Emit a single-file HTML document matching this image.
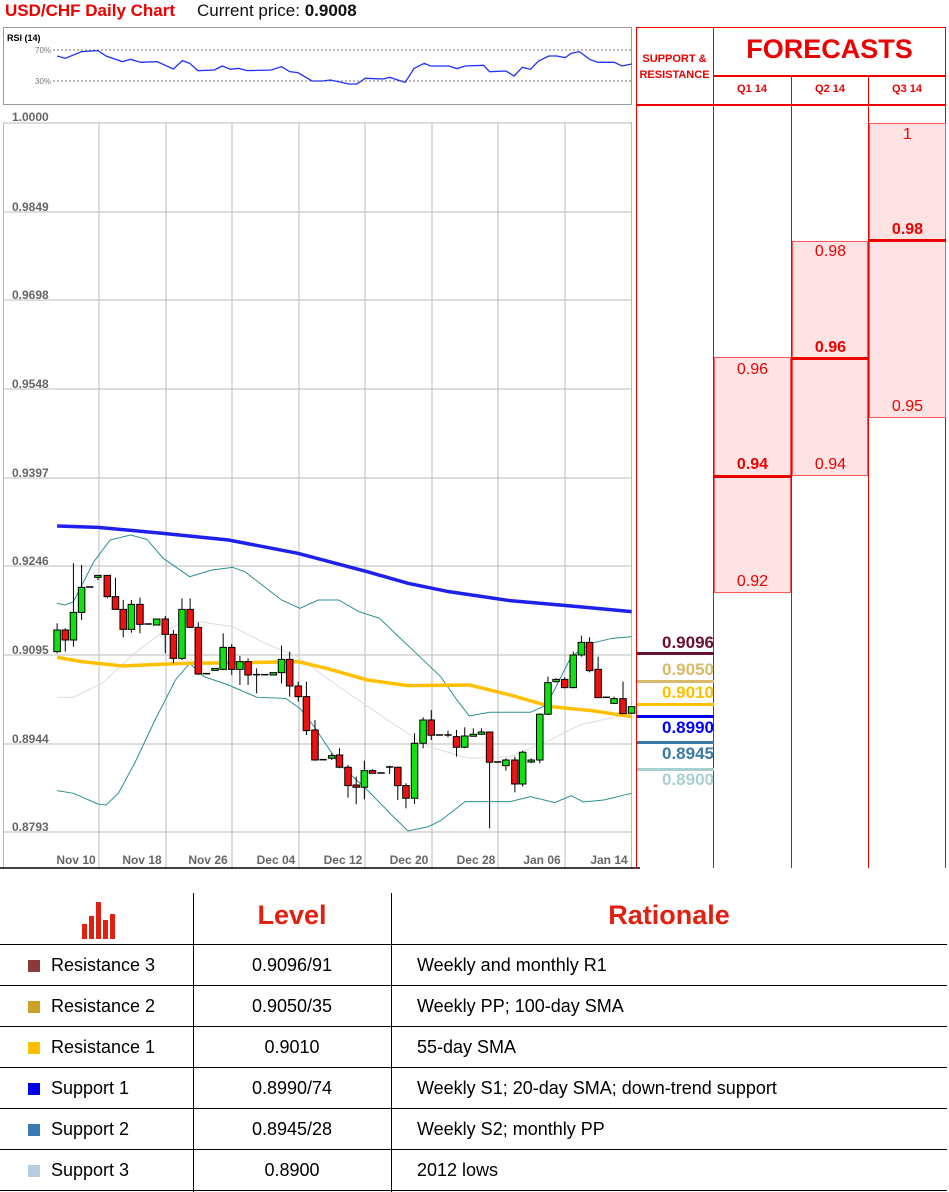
<!DOCTYPE html>
<html><head><meta charset="utf-8"><style>
body{margin:0;width:949px;height:1192px;background:#fff;position:relative;overflow:hidden;font-family:"Liberation Sans",sans-serif}
.a{position:absolute;white-space:nowrap}
.yl{position:absolute;left:12px;font-size:12px;color:#666;font-weight:bold;line-height:12px}
.dl{position:absolute;top:853px;font-size:12px;color:#666;font-weight:bold;width:60px;text-align:center;line-height:14px}
.col{position:absolute;top:27px;bottom:324px;border-left:1.5px solid #e00}
.pk{position:absolute;background:#fde3e3;border:1px solid #f55;box-sizing:border-box}
.fv{position:absolute;font-size:16px;color:#e00;text-align:center;width:77px;line-height:16px}
.fb{font-weight:bold}
.rl{position:absolute;height:3px;left:869px;width:78px}
.sr{position:absolute;left:637px;width:77px;text-align:right;font-size:17px;font-weight:bold;line-height:18px;padding-right:0}
.ln{position:absolute;left:637px;width:77px;height:3px}
.row{position:absolute;left:0;width:947px;height:41px;font-size:18px;color:#000;line-height:41px}
.hr{position:absolute;left:0;width:947px;height:1px;background:#000}
.sq{position:absolute;left:28px;top:15px;width:12px;height:12px}
</style></head><body>
<div class="a" style="left:5px;top:1px;font-size:17px;font-weight:bold;color:#e00">USD/CHF Daily Chart</div>
<div class="a" style="left:197px;top:1px;font-size:17px;color:#111">Current price: <b>0.9008</b></div>

<!-- RSI box -->
<div class="a" style="left:3px;top:27px;width:627px;height:76px;border:1px solid #999"></div>
<div class="a" style="left:7px;top:33px;font-size:9px;font-weight:bold">RSI (14)</div>
<div class="a" style="left:35px;top:46px;font-size:8px;color:#777">70%</div>
<div class="a" style="left:35px;top:77px;font-size:8px;color:#777">30%</div>
<svg class="a" style="left:0;top:0" width="640" height="110">
<line x1="53" y1="50" x2="631" y2="50" stroke="#777" stroke-dasharray="2,2"/>
<line x1="53" y1="81" x2="631" y2="81" stroke="#777" stroke-dasharray="2,2"/>
<g transform="scale(0.408,0.3333)"><polyline fill="none" stroke="#2030ff" stroke-width="1.3" vector-effect="non-scaling-stroke" points="140,168 160,175 200,155 240,152 260,168 300,185 320,178 345,187 385,185 425,207 447,182 465,190 485,212 525,210 545,198 565,208 585,205 605,212 665,210 690,200 710,215 730,218 765,243 790,243 810,240 855,252 875,252 895,235 940,237 955,232 993,247 1015,205 1040,190 1055,198 1100,198 1120,206 1140,198 1185,196 1200,215 1240,213 1260,228 1280,202 1300,208 1320,183 1345,168 1365,168 1385,173 1400,160 1420,155 1445,178 1465,187 1505,187 1525,198 1548,192"/></g>
</svg>

<!-- main chart -->
<div class="a" style="left:3px;top:122px;width:627px;height:746px;border-left:1px solid #bbb;border-right:1px solid #bbb"></div>
<div class="yl" style="top:111px">1.0000</div>
<div class="yl" style="top:201px">0.9849</div>
<div class="yl" style="top:289px">0.9698</div>
<div class="yl" style="top:378px">0.9548</div>
<div class="yl" style="top:467px">0.9397</div>
<div class="yl" style="top:555px">0.9246</div>
<div class="yl" style="top:644px">0.9095</div>
<div class="yl" style="top:733px">0.8944</div>
<div class="yl" style="top:821px">0.8793</div>
<svg class="a" style="left:0;top:0" width="640" height="870">
<g stroke="#bbb" stroke-width="1">
<line x1="3" y1="123" x2="631" y2="123"/><line x1="3" y1="212" x2="631" y2="212"/><line x1="3" y1="300" x2="631" y2="300"/><line x1="3" y1="389" x2="631" y2="389"/><line x1="3" y1="478" x2="631" y2="478"/><line x1="3" y1="566" x2="631" y2="566"/><line x1="3" y1="655" x2="631" y2="655"/><line x1="3" y1="744" x2="631" y2="744"/><line x1="3" y1="832" x2="631" y2="832"/>
<line x1="99" y1="123" x2="99" y2="868"/><line x1="166" y1="123" x2="166" y2="868"/><line x1="232" y1="123" x2="232" y2="868"/><line x1="299" y1="123" x2="299" y2="868"/><line x1="365" y1="123" x2="365" y2="868"/><line x1="432" y1="123" x2="432" y2="868"/><line x1="498" y1="123" x2="498" y2="868"/><line x1="565" y1="123" x2="565" y2="868"/>
</g>
<g transform="translate(0,500) scale(0.408,0.3333)" fill="none">
<polyline stroke="#ddd" stroke-width="1" vector-effect="non-scaling-stroke" points="140,592 180,592 250,550 330,460 400,395 460,360 570,380 650,430 730,470 830,560 950,660 1050,740 1150,775 1250,770 1350,720 1420,675 1548,640"/>
<polyline stroke="#2a9090" stroke-width="1" vector-effect="non-scaling-stroke" points="140,310 160,315 180,305 230,185 270,120 320,105 360,118 400,175 465,230 520,210 570,202 600,215 690,300 735,325 780,300 830,300 880,335 930,355 1020,460 1080,530 1120,600 1150,648 1200,637 1300,637 1340,615 1400,470 1450,430 1500,415 1548,410"/>
<polyline stroke="#2a9090" stroke-width="1" vector-effect="non-scaling-stroke" points="140,872 180,880 240,912 260,915 290,880 330,790 380,660 430,540 465,490 500,530 560,555 630,592 700,595 735,625 770,680 830,790 900,870 960,945 1000,993 1050,980 1080,962 1140,905 1250,905 1300,890 1360,908 1400,887 1430,906 1480,900 1548,880"/>
<polyline stroke="#2020ee" stroke-width="3.5" vector-effect="non-scaling-stroke" points="140,78 240,82 400,100 560,120 730,160 900,215 1000,250 1100,275 1250,302 1400,318 1548,335"/>
<polyline stroke="#ffc000" stroke-width="3.5" vector-effect="non-scaling-stroke" points="140,472 200,485 300,498 450,490 600,488 730,485 800,505 900,540 1000,557 1150,555 1250,585 1350,620 1450,632 1548,650"/>
</g>
<g id="c" transform="translate(0,500) scale(0.408,0.3333)" stroke="#000" stroke-width="1" vector-effect="non-scaling-stroke"></g>
<line x1="0" y1="868" x2="947" y2="868" stroke="#000" stroke-width="1.5"/>
</svg>
<script>
var d=[[140,390,455,370,460,'g'],[160,390,420,385,455,'r'],[180,337,420,190,440,'g'],[200,262,337,195,360,'g'],[220,261,263,261,263,'d'],[240,226,232,226,240,'g'],[263,226,290,226,295,'r'],[283,290,328,233,330,'r'],[302,328,388,300,412,'r'],[322,313,388,300,398,'g'],[343,313,373,293,400,'r'],[363,372,374,372,374,'d'],[384,357,375,357,375,'g'],[405,357,403,348,460,'r'],[425,403,475,390,490,'r'],[446,328,475,295,480,'g'],[466,328,382,295,385,'r'],[486,382,522,367,525,'r'],[506,521,523,521,523,'d'],[527,505,510,505,510,'g'],[547,442,508,400,510,'g'],[568,442,508,432,525,'r'],[588,485,508,468,555,'g'],[608,485,525,475,555,'r'],[629,524,526,505,580,'d'],[649,524,526,524,526,'d'],[670,518,525,518,525,'g'],[690,478,518,437,550,'g'],[710,478,558,455,590,'r'],[731,558,590,545,605,'r'],[751,590,692,545,705,'r'],[772,690,780,660,782,'r'],[792,779,781,779,781,'d'],[813,767,775,760,780,'g'],[832,765,802,745,805,'r'],[853,802,857,795,893,'r'],[873,855,862,830,913,'r'],[893,812,862,782,898,'g'],[913,812,820,808,820,'r'],[934,819,821,819,821,'d'],[955,801,803,797,822,'d'],[975,802,857,800,900,'r'],[995,857,895,850,925,'r'],[1016,730,895,700,912,'g'],[1037,660,730,652,745,'g'],[1057,660,706,630,720,'r'],[1077,705,707,705,707,'d'],[1098,705,707,692,712,'d'],[1119,710,742,690,770,'r'],[1139,708,742,682,745,'g'],[1160,703,708,685,710,'g'],[1180,696,703,685,705,'g'],[1200,696,787,696,985,'r'],[1220,786,788,786,788,'d'],[1240,780,797,775,812,'g'],[1262,780,852,770,877,'r'],[1281,757,852,752,860,'g'],[1302,780,785,775,790,'g'],[1323,643,780,640,790,'g'],[1343,548,643,530,645,'g'],[1363,538,545,535,548,'g'],[1384,538,563,532,565,'r'],[1405,465,563,455,565,'g'],[1425,427,465,407,470,'g'],[1445,427,512,412,517,'r'],[1466,508,593,470,595,'r'],[1486,592,594,592,594,'d'],[1505,596,610,590,612,'g'],[1527,596,641,545,642,'r'],[1548,620,640,618,642,'g']];
var s='';d.forEach(function(c){var x=c[0];s+='<line x1="'+x+'" x2="'+x+'" y1="'+c[3]+'" y2="'+c[4]+'" vector-effect="non-scaling-stroke"/>';
if(c[5]=='d'){s+='<line x1="'+(x-9)+'" x2="'+(x+9)+'" y1="'+c[1]+'" y2="'+c[1]+'" stroke-width="1.5" vector-effect="non-scaling-stroke"/>'}
else s+='<rect x="'+(x-8)+'" y="'+c[1]+'" width="16" height="'+Math.max(c[2]-c[1],6)+'" fill="'+(c[5]=='g'?'#11e011':'#ee1111')+'" vector-effect="non-scaling-stroke"/>';});
document.getElementById('c').innerHTML=s;
</script>
<div class="dl" style="left:46px">Nov 10</div>
<div class="dl" style="left:112px">Nov 18</div>
<div class="dl" style="left:178px">Nov 26</div>
<div class="dl" style="left:246px">Dec 04</div>
<div class="dl" style="left:313px">Dec 12</div>
<div class="dl" style="left:379px">Dec 20</div>
<div class="dl" style="left:446px">Dec 28</div>
<div class="dl" style="left:512px">Jan 06</div>
<div class="dl" style="left:579px">Jan 14</div>

<!-- right panel -->
<div class="a" style="left:636px;top:27px;width:310px;height:841px;border:1.5px solid #e00;border-bottom:none;box-sizing:border-box"></div>
<div class="a" style="left:713px;top:75px;width:233px;height:1.5px;background:#e00"></div>
<div class="a" style="left:636px;top:104px;width:310px;height:1.5px;background:#e00"></div>
<div class="col" style="left:713px;top:27px;height:841px"></div>
<div class="col" style="left:791px;top:75px;height:793px"></div>
<div class="col" style="left:868px;top:75px;height:793px"></div>
<div class="a" style="left:636px;top:51px;width:77px;text-align:center;font-size:11px;font-weight:bold;color:#e00;line-height:16px">SUPPORT &amp;<br>RESISTANCE</div>
<div class="a" style="left:713px;top:34px;width:233px;text-align:center;font-size:27px;font-weight:bold;color:#e00">FORECASTS</div>
<div class="a" style="left:713px;top:83px;width:78px;text-align:center;font-size:11px;font-weight:bold;color:#e00">Q1 14</div>
<div class="a" style="left:791px;top:83px;width:78px;text-align:center;font-size:11px;font-weight:bold;color:#e00">Q2 14</div>
<div class="a" style="left:868px;top:83px;width:78px;text-align:center;font-size:11px;font-weight:bold;color:#e00">Q3 14</div>

<div class="pk" style="left:714px;top:357px;width:77px;height:236px"></div>
<div class="pk" style="left:792px;top:241px;width:76px;height:235px"></div>
<div class="pk" style="left:869px;top:123px;width:77px;height:295px"></div>
<div class="rl" style="left:714px;top:475px;width:77px;background:#e00"></div>
<div class="rl" style="left:792px;top:357px;width:76px;background:#e00"></div>
<div class="rl" style="left:869px;top:239px;width:77px;background:#e00"></div>
<div class="fv" style="left:714px;top:362px">0.96</div>
<div class="fv fb" style="left:714px;top:457px">0.94</div>
<div class="fv" style="left:714px;top:574px">0.92</div>
<div class="fv" style="left:792px;top:244px">0.98</div>
<div class="fv fb" style="left:792px;top:340px">0.96</div>
<div class="fv" style="left:792px;top:457px">0.94</div>
<div class="fv" style="left:869px;top:127px">1</div>
<div class="fv fb" style="left:869px;top:222px">0.98</div>
<div class="fv" style="left:869px;top:399px">0.95</div>

<div class="sr" style="top:634px;color:#6b0f2e">0.9096</div>
<div class="ln" style="top:652px;background:#6b0f2e"></div>
<div class="sr" style="top:661px;color:#d9b96a">0.9050</div>
<div class="ln" style="top:680px;background:#d9b96a"></div>
<div class="sr" style="top:684px;color:#ffc000">0.9010</div>
<div class="ln" style="top:703px;background:#ffc000"></div>
<div class="ln" style="top:715px;background:#0000ff"></div>
<div class="sr" style="top:719px;color:#0000ff">0.8990</div>
<div class="ln" style="top:741px;background:#3a7aa6"></div>
<div class="sr" style="top:745px;color:#3a7aa6">0.8945</div>
<div class="ln" style="top:768px;background:#a8d0d0"></div>
<div class="sr" style="top:771px;color:#a8d0d0">0.8900</div>

<!-- table -->
<div class="a" style="left:193px;top:893px;width:1px;height:299px;background:#000"></div>
<div class="a" style="left:391px;top:893px;width:1px;height:299px;background:#000"></div>
<svg class="a" style="left:80px;top:902px" width="40" height="40"><g fill="#e02010"><rect x="2" y="22" width="5" height="15"/><rect x="9" y="14" width="5" height="23"/><rect x="16" y="0" width="5" height="37"/><rect x="23" y="18" width="5" height="19"/><rect x="30" y="12" width="5" height="25"/></g></svg>
<div class="a" style="left:193px;top:900px;width:198px;text-align:center;font-size:27px;font-weight:bold;color:#e02010">Level</div>
<div class="a" style="left:391px;top:900px;width:556px;text-align:center;font-size:27px;font-weight:bold;color:#e02010">Rationale</div>
<div class="hr" style="top:944px"></div><div class="hr" style="top:985px"></div><div class="hr" style="top:1026px"></div><div class="hr" style="top:1067px"></div><div class="hr" style="top:1108px"></div><div class="hr" style="top:1149px"></div><div class="hr" style="top:1190px"></div>

<div class="row" style="top:945px"><div class="sq" style="background:#8b3a3a"></div><span class="a" style="left:51px">Resistance 3</span><span class="a" style="left:193px;width:198px;text-align:center">0.9096/91</span><span class="a" style="left:417px">Weekly and monthly R1</span></div>
<div class="row" style="top:986px"><div class="sq" style="background:#c9a227"></div><span class="a" style="left:51px">Resistance 2</span><span class="a" style="left:193px;width:198px;text-align:center">0.9050/35</span><span class="a" style="left:417px">Weekly PP; 100-day SMA</span></div>
<div class="row" style="top:1027px"><div class="sq" style="background:#ffc000"></div><span class="a" style="left:51px">Resistance 1</span><span class="a" style="left:193px;width:198px;text-align:center">0.9010</span><span class="a" style="left:417px">55-day SMA</span></div>
<div class="row" style="top:1068px"><div class="sq" style="background:#0000ee"></div><span class="a" style="left:51px">Support 1</span><span class="a" style="left:193px;width:198px;text-align:center">0.8990/74</span><span class="a" style="left:417px">Weekly S1; 20-day SMA; down-trend support</span></div>
<div class="row" style="top:1109px"><div class="sq" style="background:#3a7ab0"></div><span class="a" style="left:51px">Support 2</span><span class="a" style="left:193px;width:198px;text-align:center">0.8945/28</span><span class="a" style="left:417px">Weekly S2; monthly PP</span></div>
<div class="row" style="top:1150px"><div class="sq" style="background:#b8cce4"></div><span class="a" style="left:51px">Support 3</span><span class="a" style="left:193px;width:198px;text-align:center">0.8900</span><span class="a" style="left:417px">2012 lows</span></div>
</body></html>
